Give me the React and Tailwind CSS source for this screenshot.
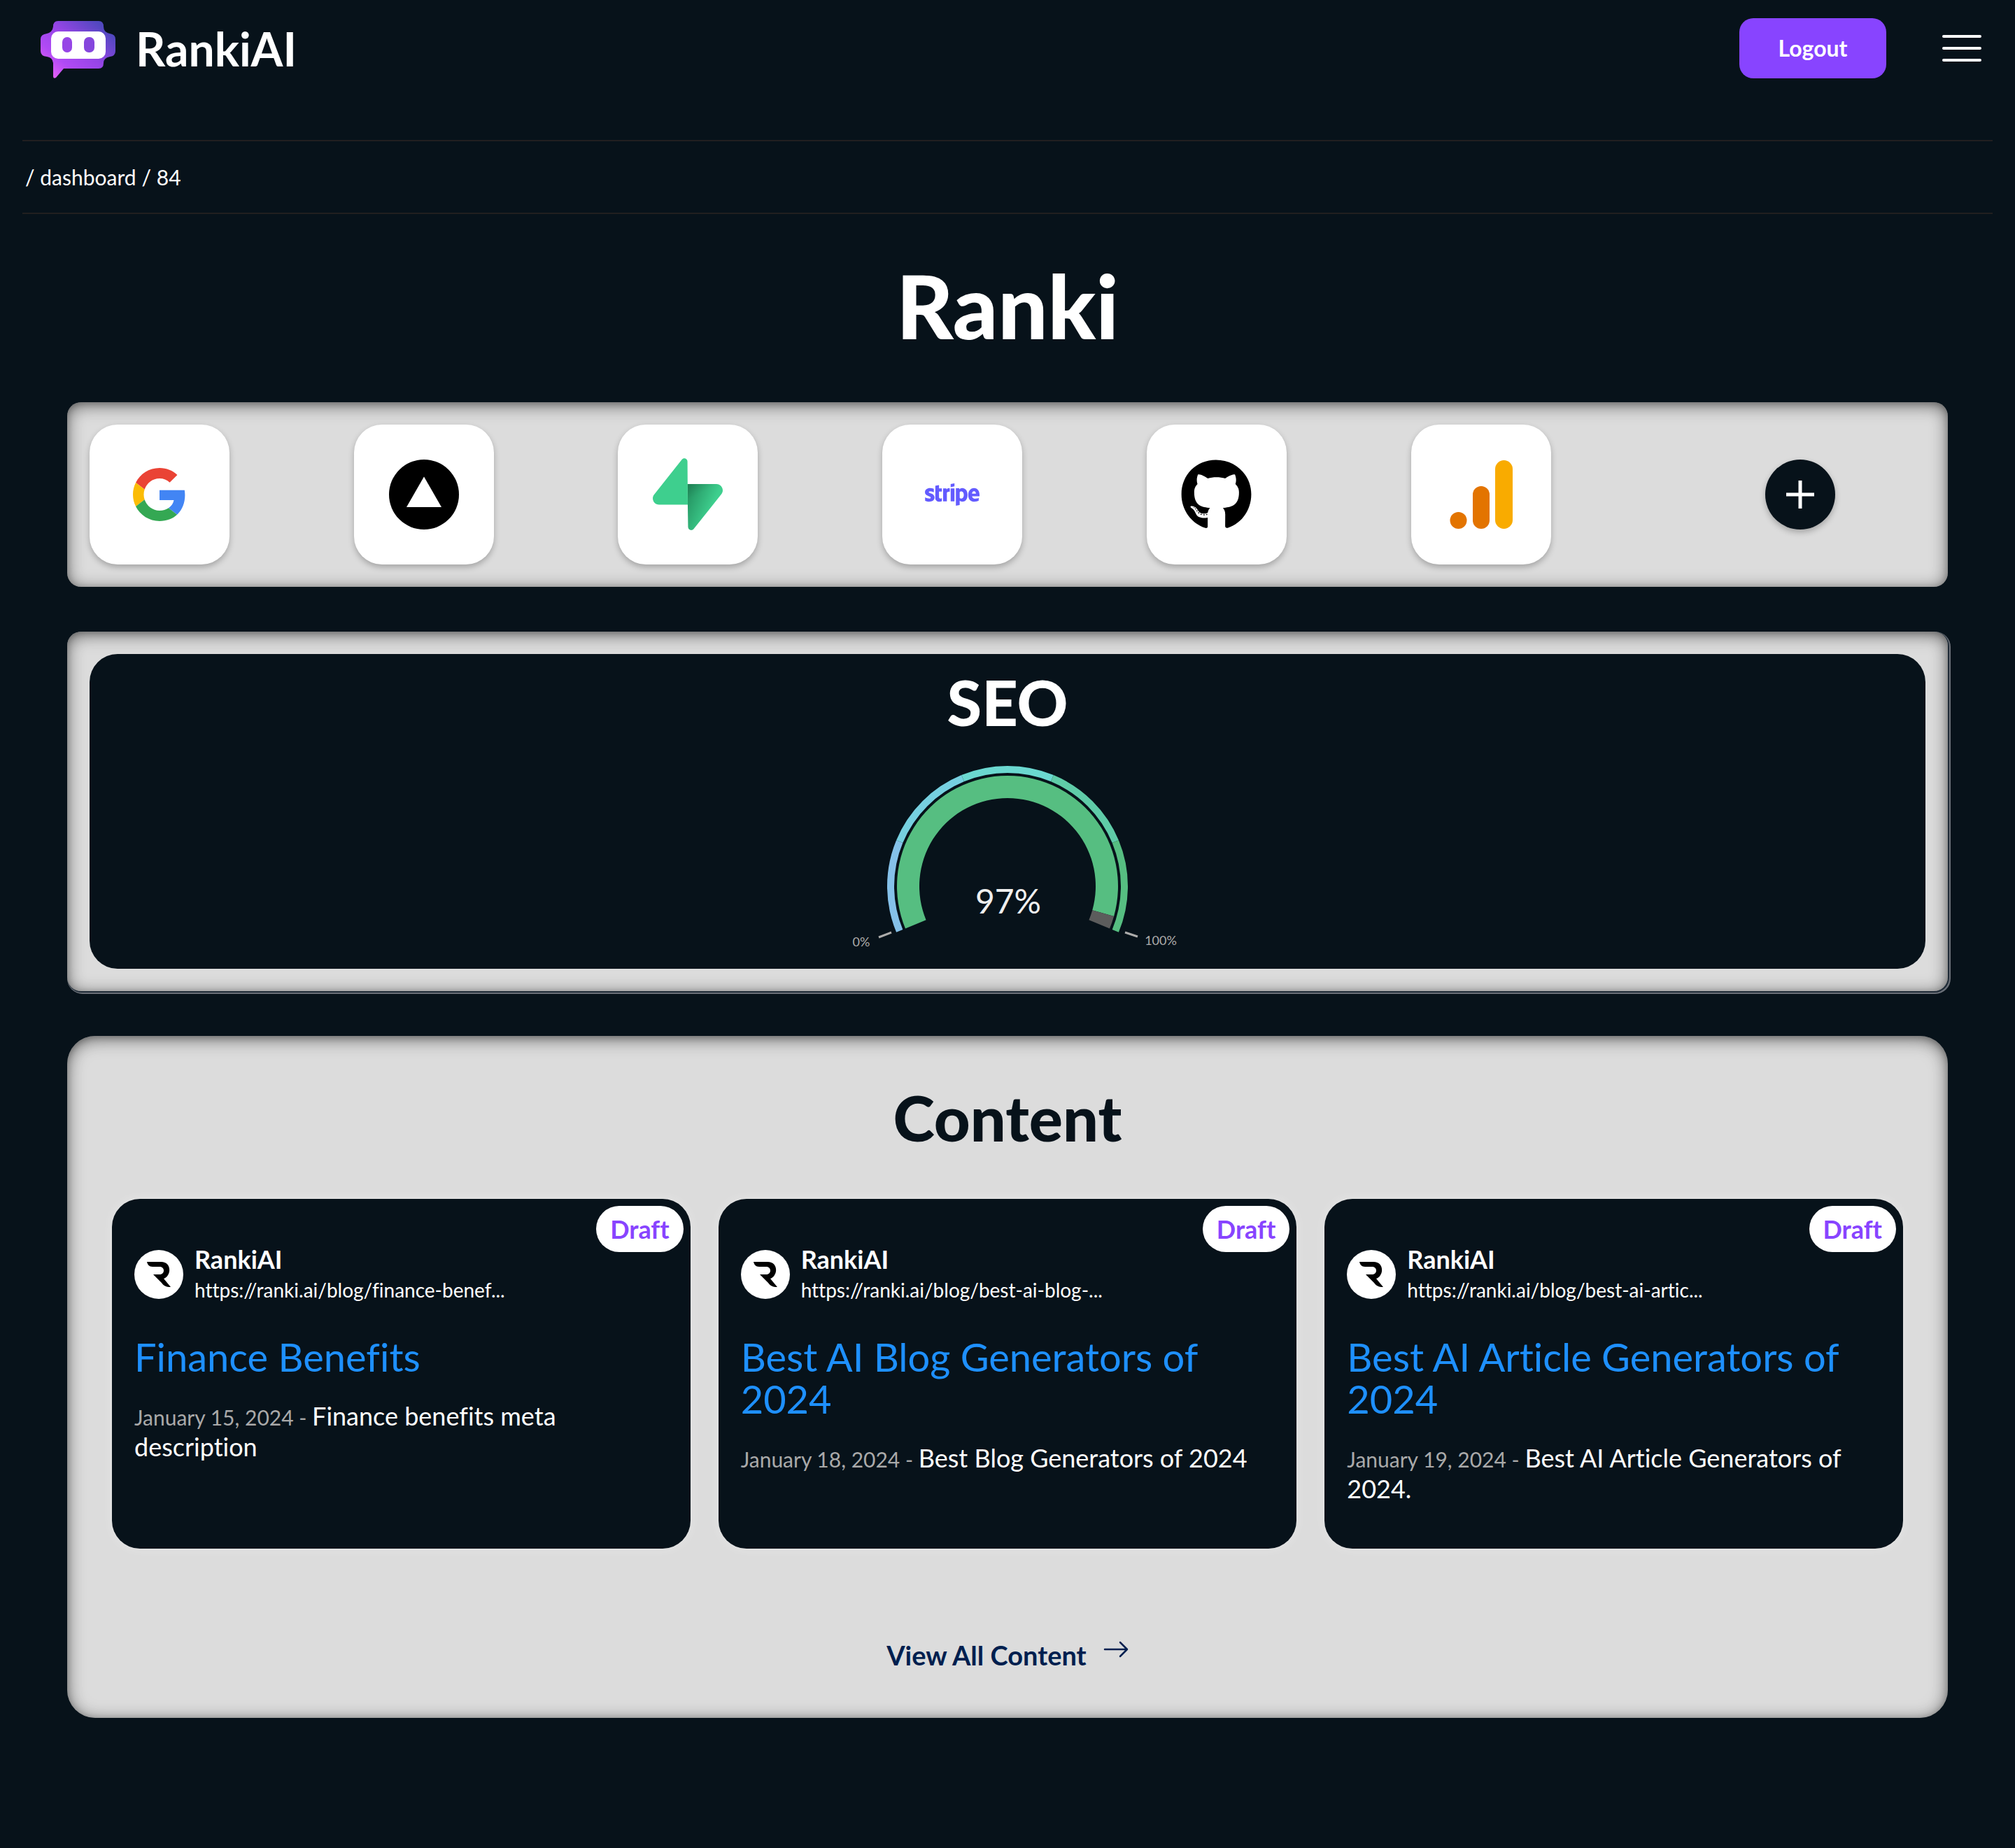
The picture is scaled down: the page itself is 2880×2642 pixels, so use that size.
import React from 'react';
import { FaStripe, FaGithub } from 'react-icons/fa';

const CX = 260;
const CY = 184;

const polar = (r, deg) => {
  const a = (deg * Math.PI) / 180;
  return [CX + r * Math.cos(a), CY - r * Math.sin(a)];
};

const arc = (outer, inner, from, to) => {
  const large = Math.abs(from - to) > 180 ? 1 : 0;
  const [x1, y1] = polar(outer, from);
  const [x2, y2] = polar(outer, to);
  const [x3, y3] = polar(inner, to);
  const [x4, y4] = polar(inner, from);
  return `M${x1} ${y1}A${outer} ${outer} 0 ${large} 1 ${x2} ${y2}L${x3} ${y3}A${inner} ${inner} 0 ${large} 0 ${x4} ${y4}Z`;
};

const START = 202.5;
const END = -22.5;
const SWEEP = START - END;
const BANDS = ['#85c1e9', '#76d0e0', '#6bd8d0', '#5fcca8', '#56be81'];

function Gauge({ value }) {
  const split = START - (SWEEP * value) / 100;
  return (
    <svg viewBox="0 0 520 280" className="h-[280px] w-[520px]" role="img" aria-label={`SEO score ${value}%`}>
      {BANDS.map((color, i) => (
        <path key={color} d={arc(172, 162, START - (SWEEP * i) / 5, START - (SWEEP * (i + 1)) / 5)} fill={color} />
      ))}
      <path d={arc(158, 126, START, split)} fill="#56be81" />
      <path d={arc(158, 126, split, END)} fill="#5c5c5c" />
      <path d="M76 257L94 250M428 250L446 256" stroke="#adacab" strokeWidth="3" />
      <text x="261" y="223" textAnchor="middle" fontSize="48" fill="#efefef">{value}%</text>
      <text x="51" y="270" textAnchor="middle" fontSize="18" fill="#adacab">0%</text>
      <text x="479" y="268" textAnchor="middle" fontSize="18" fill="#adacab">100%</text>
    </svg>
  );
}

function BotLogo() {
  return (
    <svg viewBox="0 0 108 82" className="mt-1 h-[82px] w-[108px]" aria-hidden="true">
      <defs>
        <linearGradient id="bot" x1="18" y1="82" x2="88" y2="0" gradientUnits="userSpaceOnUse">
          <stop offset="0" stopColor="#e660f5" />
          <stop offset="0.25" stopColor="#b04af5" />
          <stop offset="0.55" stopColor="#9645e6" />
          <stop offset="0.95" stopColor="#5148bf" />
        </linearGradient>
      </defs>
      <path fill="url(#bot)" d="M25 0H83Q90 0 90 8Q90 16 99 18Q107 19 107 26V43Q107 50 99 51Q90 53 90 60Q90 68 83 68H33L22 81Q18 83 18 79V60Q17 52 9 51Q0 50 0 43V26Q0 19 9 18Q17 16 18 8Q18 0 25 0Z" />
      <rect x="15" y="15" width="78" height="39" rx="10" fill="#fff" />
      <rect x="31" y="23" width="14" height="22" rx="7" fill="#9645e6" />
      <rect x="62" y="23" width="15" height="22" rx="7" fill="#8546dd" />
    </svg>
  );
}

function GoogleLogo() {
  return (
    <svg viewBox="0 0 48 48" className="size-[76px]" aria-hidden="true">
      <path fill="#EA4335" d="M24 9.500c3.540 0 6.710 1.220 9.210 3.600l6.850-6.850C35.900 2.380 30.470 0 24 0 14.620 0 6.510 5.380 2.560 13.220l7.980 6.190C12.430 13.720 17.740 9.500 24 9.500z" />
      <path fill="#4285F4" d="M46.980 24.550c0-1.570-.150-3.090-.380-4.550H24v9.020h12.940c-.580 2.960-2.260 5.480-4.780 7.180l7.730 6c4.510-4.180 7.090-10.360 7.090-17.650z" />
      <path fill="#FBBC05" d="M10.530 28.590c-.480-1.450-.760-2.990-.760-4.590s.270-3.140.760-4.590l-7.980-6.190C.920 16.460 0 20.120 0 24c0 3.880.920 7.540 2.560 10.780l7.970-6.190z" />
      <path fill="#34A853" d="M24 48c6.480 0 11.930-2.130 15.890-5.810l-7.730-6c-2.150 1.450-4.920 2.300-8.160 2.300-6.260 0-11.570-4.220-13.470-9.910l-7.980 6.190C6.510 42.620 14.620 48 24 48z" />
    </svg>
  );
}

function VercelLogo() {
  return (
    <svg viewBox="0 0 100 100" className="size-[100px]" aria-hidden="true">
      <circle cx="50" cy="50" r="50" />
      <path d="M50 24.500L75 68H25Z" fill="#fff" />
    </svg>
  );
}

function SupabaseLogo() {
  return (
    <svg viewBox="0 0 109 113" className="h-[104px] w-[100px]" aria-hidden="true">
      <defs>
        <linearGradient id="supaA" x1="53.974" y1="54.974" x2="94.163" y2="71.829" gradientUnits="userSpaceOnUse">
          <stop stopColor="#249361" />
          <stop offset="1" stopColor="#3ECF8E" />
        </linearGradient>
        <linearGradient id="supaB" x1="36.156" y1="30.578" x2="54.484" y2="65.081" gradientUnits="userSpaceOnUse">
          <stop />
          <stop offset="1" stopOpacity="0" />
        </linearGradient>
      </defs>
      <path d="M63.708 110.284c-2.86 3.601-8.658 1.628-8.727-2.970l-1.007-67.251h45.220c8.190 0 12.758 9.460 7.665 15.874l-43.151 54.347Z" fill="url(#supaA)" />
      <path d="M63.708 110.284c-2.86 3.601-8.658 1.628-8.727-2.970l-1.007-67.251h45.220c8.190 0 12.758 9.460 7.665 15.874l-43.151 54.347Z" fill="url(#supaB)" fillOpacity="0.2" />
      <path d="M45.317 2.071c2.860-3.601 8.657-1.628 8.726 2.970l.442 67.251H9.830c-8.190 0-12.759-9.460-7.665-15.875L45.317 2.072Z" fill="#3ECF8E" />
    </svg>
  );
}

function AnalyticsLogo() {
  return (
    <svg viewBox="0 0 90 98" className="h-[98px] w-[90px]" aria-hidden="true">
      <rect x="65" y="0" width="25" height="98" rx="12.500" fill="#f9ab00" />
      <rect x="33" y="37" width="24" height="61" rx="12" fill="#e37400" />
      <circle cx="12.500" cy="86" r="12" fill="#e37400" />
    </svg>
  );
}

const TOOLS = [
  ['Google', <GoogleLogo />],
  ['Vercel', <VercelLogo />],
  ['Supabase', <SupabaseLogo />],
  ['Stripe', <FaStripe className="size-[78px] text-[#635bff]" />],
  ['GitHub', <FaGithub className="size-[103px]" />],
  ['Google Analytics', <AnalyticsLogo />],
];

const POSTS = [
  { url: 'https://ranki.ai/blog/finance-benef...', title: 'Finance Benefits', date: 'January 15, 2024', text: 'Finance benefits meta description' },
  { url: 'https://ranki.ai/blog/best-ai-blog-...', title: 'Best AI Blog Generators of 2024', date: 'January 18, 2024', text: 'Best Blog Generators of 2024' },
  { url: 'https://ranki.ai/blog/best-ai-artic...', title: 'Best AI Article Generators of 2024', date: 'January 19, 2024', text: 'Best AI Article Generators of 2024.' },
];

const INSET = 'shadow-[inset_0_4px_24px_rgba(0,0,0,0.55),inset_0_2px_8px_rgba(0,0,0,0.2)]';

function PostCard({ post }) {
  return (
    <article className="relative flex min-h-[500px] flex-col rounded-[40px] bg-[#07121a] px-8 pt-16 pb-8 text-white shadow-[0_0_16px_rgba(255,255,255,0.3)]">
      <span className="absolute top-[10px] right-[10px] flex h-[66px] items-center rounded-full bg-white px-5 text-[36px] font-bold text-[#8844ff]">Draft</span>
      <div className="flex items-center gap-4">
        <span className="flex size-[70px] shrink-0 items-center justify-center rounded-full bg-white">
          <svg viewBox="0 0 34 36" className="h-9 w-[34px]" aria-hidden="true">
            <path d="M0 0H20C36 0 35 20 24 24L34 36C27 36 24 34 21 30L9 18H18C26 18 26 7 18 7H8C3 7 1 4 0 0Z" />
          </svg>
        </span>
        <div>
          <h3 className="text-[36px] leading-11 font-bold">RankiAI</h3>
          <p className="text-[28px] leading-11">{post.url}</p>
        </div>
      </div>
      <h4 className="mt-11 text-[56px] leading-[60px]">
        <a href="#post" className="text-[#1e90ff]">{post.title}</a>
      </h4>
      <p className="mt-8 text-[36px] leading-11">
        <span className="text-[30px] leading-8 text-[#a9a9a9]">{post.date} - </span>
        {post.text}
      </p>
    </article>
  );
}

export default function App() {
  return (
    <div className="min-h-screen bg-[#07121a] px-8 font-['Lato',sans-serif] text-white [font-variant-ligatures:none]">
      <header className="flex h-[138px] items-center justify-between pr-4 pl-[26px]">
        <a href="#home" className="flex items-center gap-7">
          <BotLogo />
          <span className="text-[66px] font-bold">RankiAI</span>
        </a>
        <div className="flex items-center gap-20">
          <button type="button" className="h-[86px] w-[210px] rounded-[20px] bg-[#8844ff] text-[32px] font-bold">Logout</button>
          <button type="button" aria-label="Menu" className="flex w-14 flex-col gap-[13px]">
            <span className="h-1 rounded-full bg-white" />
            <span className="h-1 rounded-full bg-white" />
            <span className="h-1 rounded-full bg-white" />
          </button>
        </div>
      </header>

      <nav aria-label="Breadcrumb" className="mt-[62px] flex h-[106px] items-center gap-2 border-y-2 border-[#211f20] px-1 text-[30px]">
        <a href="#dashboard">/ dashboard</a>
        <a href="#site">/ 84</a>
      </nav>

      <main className="px-16">
        <h1 className="mt-15 text-center text-[126px] leading-[141px] font-black">Ranki</h1>

        <section aria-label="Integrations" className={`mt-17 grid grid-cols-7 items-center gap-5 rounded-[20px] bg-[#dcdcdc] p-8 ${INSET}`}>
          {TOOLS.map(([name, logo]) => (
            <button key={name} type="button" aria-label={name} className="flex size-[200px] items-center justify-center rounded-[40px] bg-white text-black shadow-[0_4px_8px_rgba(0,0,0,0.25)]">
              {logo}
            </button>
          ))}
          <button type="button" aria-label="Add integration" className="flex size-[100px] items-center justify-center justify-self-center rounded-full bg-[#07121a] shadow-[0_4px_8px_rgba(0,0,0,0.25)]">
            <svg viewBox="0 0 40 40" className="size-10" aria-hidden="true">
              <path d="M20 0V40M0 20H40" stroke="#fff" strokeWidth="5" />
            </svg>
          </button>
        </section>

        <section className="mt-16 rounded-[20px] bg-[#dcdcdc] p-8 shadow-[inset_0_4px_24px_rgba(0,0,0,0.55),inset_0_2px_8px_rgba(0,0,0,0.2),1px_1px_0_1px_#1f2b37,2px_2px_0_2px_#6b7078]">
          <div className="flex flex-col items-center rounded-[40px] bg-[#07121a] pt-5 pb-[22px]">
            <h2 className="text-[90px] leading-[96px] font-black">SEO</h2>
            <div className="mt-8">
              <Gauge value={97} />
            </div>
          </div>
        </section>

        <section className={`mt-16 rounded-[40px] bg-[#dcdcdc] px-16 pt-16 pb-16 text-[#07121a] ${INSET}`}>
          <h2 className="text-center text-[90px] leading-[105px] font-black">Content</h2>
          <div className="mt-16 grid grid-cols-3 gap-10">
            {POSTS.map((post) => (
              <PostCard key={post.url} post={post} />
            ))}
          </div>
          <div className="mt-32 flex justify-center pb-[2px]">
            <a href="#content" className="flex items-start gap-6 text-[38px] leading-12 font-bold text-[#001f4f]">
              View All Content
              <svg viewBox="0 0 36 24" className="mt-1 h-6 w-9" fill="none" stroke="currentColor" strokeWidth="2.500" strokeLinecap="round" strokeLinejoin="round" aria-hidden="true">
                <path d="M2 12H34M24 2L34 12L24 22" />
              </svg>
            </a>
          </div>
        </section>
      </main>
    </div>
  );
}
